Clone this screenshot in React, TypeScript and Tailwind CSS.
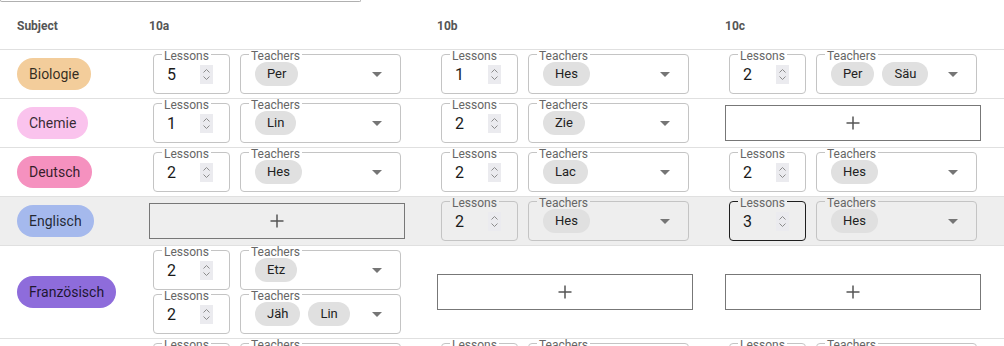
import React from 'react';

type Entry = { lessons: number; teachers: string[]; focused?: boolean };
type Row = {
  subject: string;
  color: string;
  cells: (Entry[] | null)[];
  highlight?: boolean;
};

const classes = ['10a', '10b', '10c'];

const rows: Row[] = [
  {
    subject: 'Biologie',
    color: 'bg-[#f3cd9b]',
    cells: [
      [{ lessons: 5, teachers: ['Per'] }],
      [{ lessons: 1, teachers: ['Hes'] }],
      [{ lessons: 2, teachers: ['Per', 'Säu'] }],
    ],
  },
  {
    subject: 'Chemie',
    color: 'bg-[#fac3ed]',
    cells: [[{ lessons: 1, teachers: ['Lin'] }], [{ lessons: 2, teachers: ['Zie'] }], null],
  },
  {
    subject: 'Deutsch',
    color: 'bg-[#f591bf]',
    cells: [
      [{ lessons: 2, teachers: ['Hes'] }],
      [{ lessons: 2, teachers: ['Lac'] }],
      [{ lessons: 2, teachers: ['Hes'] }],
    ],
  },
  {
    subject: 'Englisch',
    color: 'bg-[#a5b9ed]',
    highlight: true,
    cells: [
      null,
      [{ lessons: 2, teachers: ['Hes'] }],
      [{ lessons: 3, teachers: ['Hes'], focused: true }],
    ],
  },
  {
    subject: 'Französisch',
    color: 'bg-[#8e6cdb]',
    cells: [
      [
        { lessons: 2, teachers: ['Etz'] },
        { lessons: 2, teachers: ['Jäh', 'Lin'] },
      ],
      null,
      null,
    ],
  },
  {
    subject: 'Geschichte',
    color: 'bg-[#9fd8b0]',
    cells: [
      [{ lessons: 2, teachers: ['Kra'] }],
      [{ lessons: 2, teachers: ['Kra'] }],
      [{ lessons: 2, teachers: ['Mül'] }],
    ],
  },
];

function Spinner() {
  return (
    <div className="flex h-[19px] w-[13px] shrink-0 items-center justify-center bg-[#ebebef]">
      <svg width="9" height="15" viewBox="0 0 9 15" fill="none" stroke="#8c8c8c" strokeWidth="1">
        <path d="M1.5 5.5 L4.5 2.5 L7.5 5.5" />
        <path d="M1.5 9.5 L4.5 12.5 L7.5 9.5" />
      </svg>
    </div>
  );
}

function LessonsField({ value, focused, bg }: { value: number; focused?: boolean; bg: string }) {
  return (
    <div
      className={`relative flex h-[40px] w-[77px] shrink-0 items-center rounded border pl-[13px] pr-[16px] ${
        focused ? 'border-[#1f1f1f]' : 'border-[#c4c4c4]'
      }`}
    >
      <span className={`absolute left-[8px] top-[-3px] px-[2px] text-xs leading-[8px] text-[#666] ${bg}`}>
        Lessons
      </span>
      <span className="flex-1 pt-[1px] text-base text-[#1a1a1a]">{value}</span>
      <Spinner />
    </div>
  );
}

function TeachersField({ teachers, bg }: { teachers: string[]; bg: string }) {
  return (
    <div className="relative flex h-[40px] w-[161px] shrink-0 items-center gap-2 rounded border border-[#c4c4c4] pl-[14px] pr-[11px]">
      <span className={`absolute left-[8px] top-[-3px] px-[2px] text-xs leading-[8px] text-[#666] ${bg}`}>
        Teachers
      </span>
      {teachers.map((t) => (
        <span key={t} className="h-6 rounded-full bg-[#e0e0e0] px-3 text-[13px] leading-6 text-[#222]">
          {t}
        </span>
      ))}
      <svg className="ml-auto h-6 w-6 shrink-0" viewBox="0 0 24 24" fill="#757575">
        <path d="M7 10l5 5 5-5z" />
      </svg>
    </div>
  );
}

function AddButton() {
  return (
    <div className="flex h-[36px] w-[256px] items-center justify-center border border-[#777]">
      <svg width="16" height="16" viewBox="0 0 16 16" fill="none" stroke="#555" strokeWidth="1.5">
        <path d="M8 1.5 V14.5 M1.5 8 H14.5" />
      </svg>
    </div>
  );
}

export default function App() {
  return (
    <div className="h-[346px] w-[1004px] overflow-hidden bg-white font-['Roboto',sans-serif]">
      <div className="h-[2px] w-[361px] rounded-b-[4px] border-x border-b border-[#b0b0b0]" />

      <div className="grid h-[48px] grid-cols-[133px_288px_288px_1fr] items-center border-b border-[#e0e0e0] text-xs font-bold text-[#555]">
        <div className="pl-[17px]">Subject</div>
        {classes.map((c) => (
          <div key={c} className="px-4">
            {c}
          </div>
        ))}
      </div>

      {rows.map((row) => {
        const bg = row.highlight ? 'bg-[#eeeeee]' : 'bg-white';
        return (
          <div
            key={row.subject}
            className={`grid grid-cols-[133px_288px_288px_1fr] border-b border-[#e0e0e0] ${bg}`}
          >
            <div className="flex items-center pl-[17px]">
              <span className={`h-8 rounded-full px-3 text-sm leading-8 text-black/80 ${row.color}`}>
                {row.subject}
              </span>
            </div>
            {row.cells.map((cell, i) => (
              <div key={i} className="flex flex-col justify-center gap-1 px-4 py-1">
                {cell ? (
                  cell.map((entry, j) => (
                    <div key={j} className="flex gap-[10px] pl-1">
                      <LessonsField value={entry.lessons} focused={entry.focused} bg={bg} />
                      <TeachersField teachers={entry.teachers} bg={bg} />
                    </div>
                  ))
                ) : (
                  <AddButton />
                )}
              </div>
            ))}
          </div>
        );
      })}
    </div>
  );
}
